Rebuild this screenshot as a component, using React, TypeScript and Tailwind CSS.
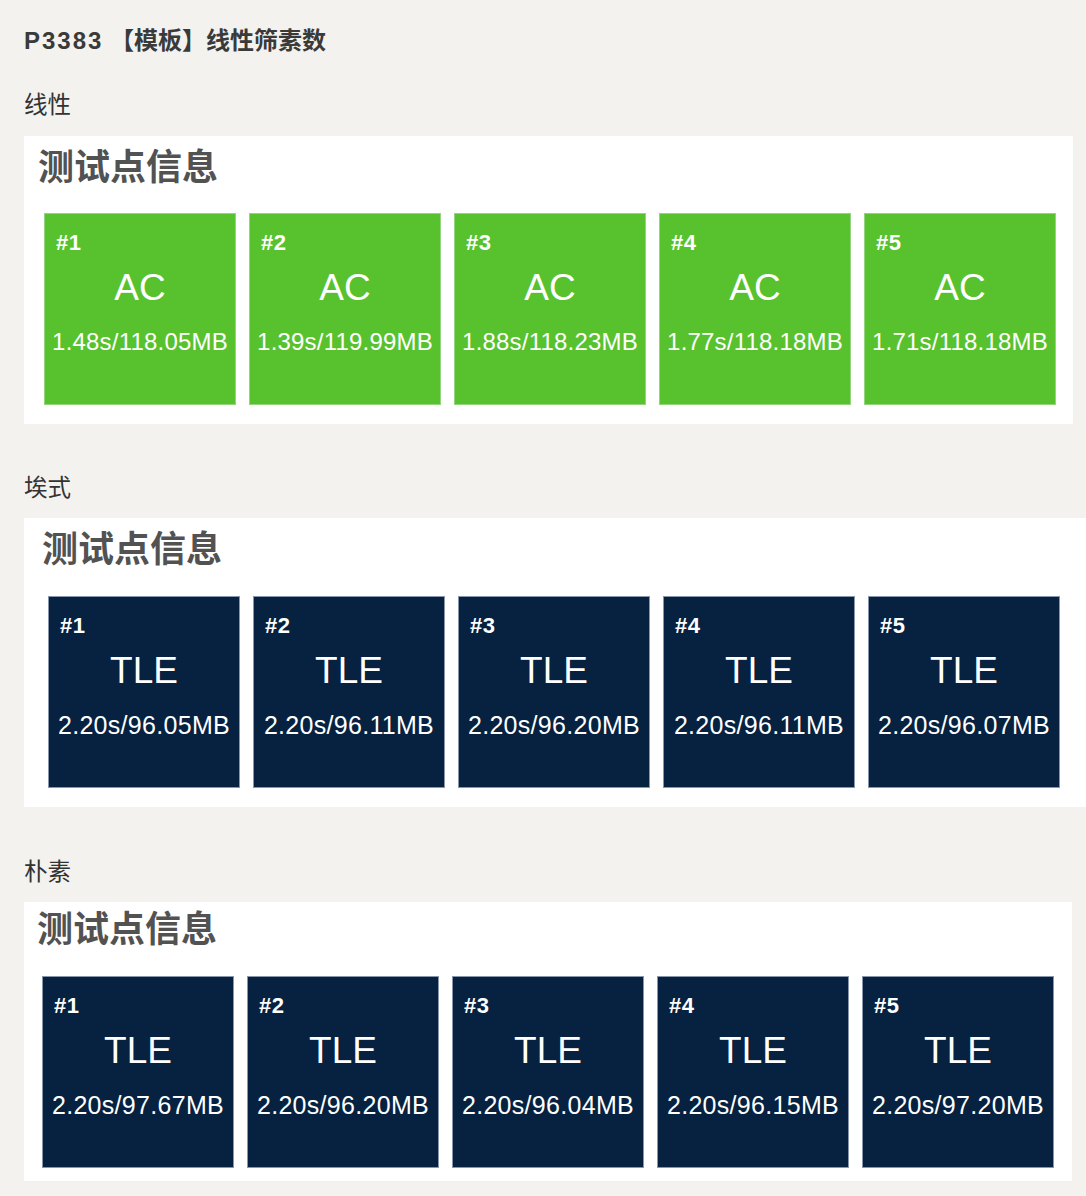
import React from "react";

type Item = { id: number; status: string; time: string };

const FONT = { fontFamily: '"Liberation Sans", "Noto Sans CJK SC", Arial, sans-serif' };

const linear: Item[] = [
  { id: 1, status: "AC", time: "1.48s/118.05MB" },
  { id: 2, status: "AC", time: "1.39s/119.99MB" },
  { id: 3, status: "AC", time: "1.88s/118.23MB" },
  { id: 4, status: "AC", time: "1.77s/118.18MB" },
  { id: 5, status: "AC", time: "1.71s/118.18MB" },
];
const eratos: Item[] = [
  { id: 1, status: "TLE", time: "2.20s/96.05MB" },
  { id: 2, status: "TLE", time: "2.20s/96.11MB" },
  { id: 3, status: "TLE", time: "2.20s/96.20MB" },
  { id: 4, status: "TLE", time: "2.20s/96.11MB" },
  { id: 5, status: "TLE", time: "2.20s/96.07MB" },
];
const naive: Item[] = [
  { id: 1, status: "TLE", time: "2.20s/97.67MB" },
  { id: 2, status: "TLE", time: "2.20s/96.20MB" },
  { id: 3, status: "TLE", time: "2.20s/96.04MB" },
  { id: 4, status: "TLE", time: "2.20s/96.15MB" },
  { id: 5, status: "TLE", time: "2.20s/97.20MB" },
];

function Box({ item }: { item: Item }) {
  const ac = item.status === "AC";
  return (
    <div
      className={
        ac
          ? "w-[192px] h-[192px] shrink-0 flex flex-col bg-[#58c22e] border border-[#93d47e] text-white"
          : "w-[192px] h-[192px] shrink-0 flex flex-col bg-[#062240] border border-[#8796aa] text-white"
      }
    >
      <div className="mt-[17px] ml-[11px] h-[24px] leading-[24px] text-[22px] font-bold tracking-[0.5px]">#{item.id}</div>
      <div className="mt-[13px] h-[40px] leading-[40px] text-[37px] text-center">{item.status}</div>
      <div
        className={
          ac
            ? "mt-[20px] h-[28px] leading-[28px] text-[24px] text-center whitespace-nowrap tracking-[0.2px]"
            : "mt-[20px] h-[28px] leading-[28px] text-[25px] text-center whitespace-nowrap tracking-[0.3px]"
        }
      >
        {item.time}
      </div>
    </div>
  );
}

function Heading({ className }: { className: string }) {
  return (
    <div className={"h-[40px] leading-[40px] text-[36px] font-bold text-[#525252] " + className}>
      测试点信息
    </div>
  );
}

export default function App() {
  return (
    <div className="min-h-[1196px] w-full bg-[#f3f2ee] text-[#333]" style={FONT}>
      <div className="pl-[24px] pt-[25px] pb-[15px]">
        <h1 className="h-[32px] leading-[32px] text-[24px] font-bold text-[#3a3a3a] whitespace-nowrap">
          <span className="tracking-[2px]">P3383</span> 【模板】线性筛素数
        </h1>

        {/* 线性 */}
        <div className="mt-[33px] h-[30px] leading-[30px] text-[23.5px] text-[#333]">线性</div>
        <div className="mt-[16px] w-[1049px] h-[288px] bg-white flex flex-col">
          <Heading className="mt-[12px] ml-[14px]" />
          <div className="mt-[25px] ml-[20px] flex gap-[13px]">
            {linear.map((it) => (
              <Box key={it.id} item={it} />
            ))}
          </div>
        </div>

        {/* 埃式 */}
        <div className="mt-[49px] h-[30px] leading-[30px] text-[23.5px] text-[#333]">埃式</div>
        <div className="mt-[15px] w-[1062px] h-[289px] bg-white flex flex-col">
          <Heading className="mt-[12px] ml-[18px]" />
          <div className="mt-[26px] ml-[24px] flex gap-[13px]">
            {eratos.map((it) => (
              <Box key={it.id} item={it} />
            ))}
          </div>
        </div>

        {/* 朴素 */}
        <div className="mt-[50px] h-[30px] leading-[30px] text-[23.5px] text-[#333]">朴素</div>
        <div className="mt-[15px] w-[1048px] h-[279px] bg-white flex flex-col">
          <Heading className="mt-[8px] ml-[13px]" />
          <div className="mt-[26px] ml-[18px] flex gap-[13px]">
            {naive.map((it) => (
              <Box key={it.id} item={it} />
            ))}
          </div>
        </div>
      </div>
    </div>
  );
}
